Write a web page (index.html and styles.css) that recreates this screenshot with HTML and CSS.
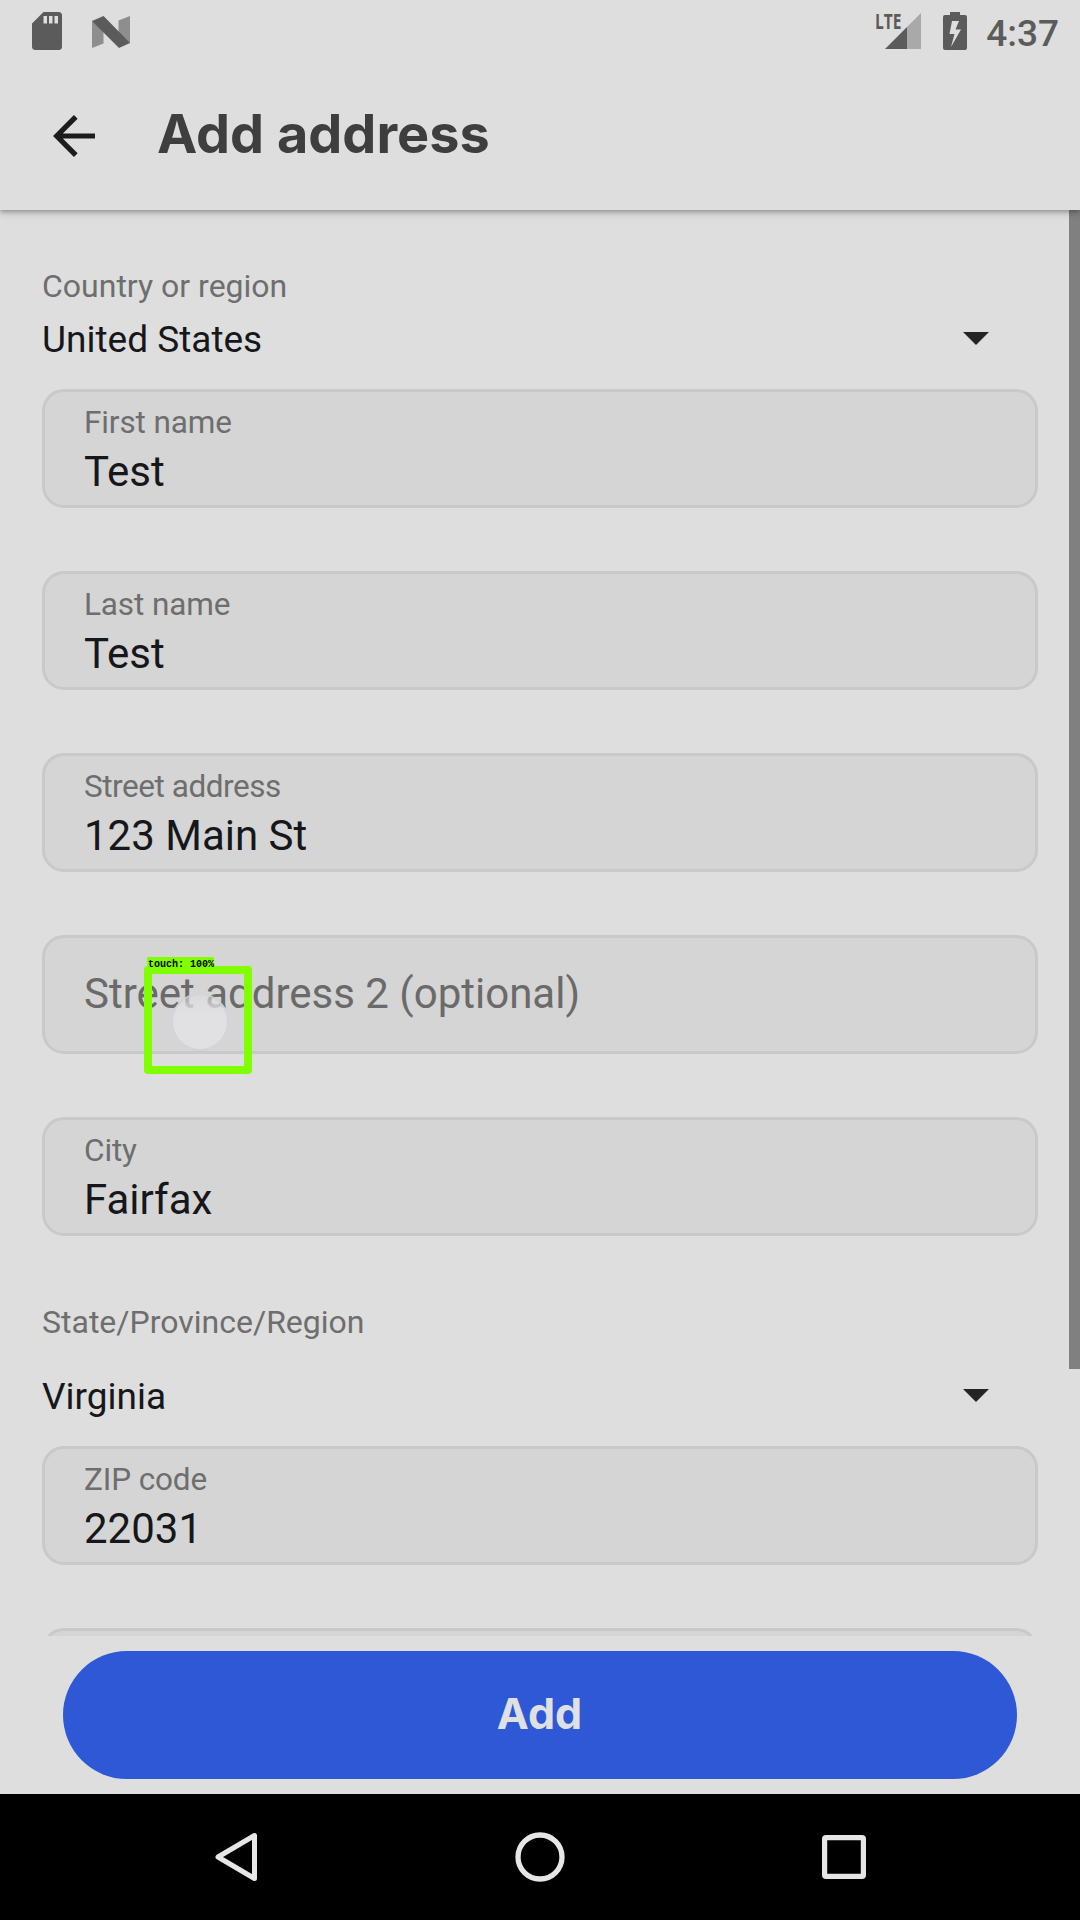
FILE: index.html
```html
<!DOCTYPE html>
<html lang="en">
<head>
<meta charset="utf-8">
<title>Add address</title>
<link rel="stylesheet" href="styles.css">
</head>
<body>
<div class="screen">
  <header class="top">
    <div class="status">
      <div class="status-left">
        <svg class="sd" width="30" height="38" viewBox="0 0 30 38"><path fill="#5b5b5b" fill-rule="evenodd" d="M11.500 0H26.500Q30 0 30 3.500V34.500Q30 38 26.500 38H3.500Q0 38 0 34.500V11.500ZM11.500 4V11.500H15V4ZM17 4V11.500H20.500V4ZM22.500 4V11.500H26V4Z"/></svg>
        <svg class="nougat" width="38" height="32" viewBox="0 0 38 32"><path fill="#8e8e8e" d="M0 5L11.500 9V27.500L0 32ZM26.500 4.500L38 0V27H26.500Z"/><path fill="#5b5b5b" d="M0 5L11.500 0L38 27L27 32Z"/></svg>
      </div>
      <div class="status-right">
        <div class="signal">
          <svg width="36" height="36" viewBox="0 0 36 36"><path fill="#a9a9a9" d="M36 0V36H22V14Z"/><path fill="#5b5b5b" d="M22 14V36H0Z"/></svg>
          <span class="lte">LTE</span>
        </div>
        <svg class="battery" width="24" height="38" viewBox="0 0 24 38"><path fill="#5b5b5b" fill-rule="evenodd" d="M7 0H17V3H22Q24 3 24 5V36Q24 38 22 38H2Q0 38 0 36V5Q0 3 2 3H7ZM9 9L6.500 22H11.500L8 35L18 17.500H12.500L16 9Z"/></svg>
        <span class="clock">4:37</span>
      </div>
    </div>
    <div class="appbar">
      <svg class="back" width="42" height="42" viewBox="0 0 42 42" fill="none" stroke="#1c1c1c" stroke-width="5.200"><path d="M42 21H4M22.800 1.800L3.700 21L22.800 40.200"/></svg>
      <h1 class="title">Add address</h1>
    </div>
  </header>

  <main class="form">
    <div class="select">
      <div class="select-label">Country or region</div>
      <div class="select-row"><span>United States</span><svg class="caret" width="26" height="13" viewBox="0 0 26 13"><path fill="#242424" d="M0 0H26L13 13Z"/></svg></div>
    </div>
    <div class="field"><span class="label">First name</span><span class="value">Test</span></div>
    <div class="field"><span class="label">Last name</span><span class="value">Test</span></div>
    <div class="field"><span class="label tight">Street address</span><span class="value">123 Main St</span></div>
    <div class="field empty">
      <span class="value">Street address 2 (optional)</span>
      <div class="touch-dot"></div>
      <div class="touch-box"></div>
      <div class="touch-tag">touch: 100%</div>
    </div>
    <div class="field"><span class="label">City</span><span class="value">Fairfax</span></div>
    <div class="select state">
      <div class="select-label">State/Province/Region</div>
      <div class="select-row"><span>Virginia</span><svg class="caret" width="26" height="13" viewBox="0 0 26 13"><path fill="#242424" d="M0 0H26L13 13Z"/></svg></div>
    </div>
    <div class="field"><span class="label">ZIP code</span><span class="value">22031</span></div>
    <div class="field"></div>
    <div class="scrollbar"></div>
  </main>

  <footer class="actions"><button class="add" type="button">Add</button></footer>

  <nav class="navbar">
    <svg width="44" height="50" viewBox="0 0 44 50"><path fill="none" stroke="#e6e6e6" stroke-width="5" stroke-linejoin="round" d="M40.500 3.500V46.500L4 25Z"/></svg>
    <svg width="50" height="50" viewBox="0 0 50 50"><circle cx="25" cy="25" r="22" fill="none" stroke="#e6e6e6" stroke-width="5.300"/></svg>
    <svg width="44" height="44" viewBox="0 0 44 44"><rect x="2.600" y="2.600" width="38.800" height="38.800" rx="1.500" fill="none" stroke="#e6e6e6" stroke-width="5.200"/></svg>
  </nav>
</div>
</body>
</html>
```
FILE: styles.css
```css
* { box-sizing: border-box; }
body { margin: 0; font-family: Roboto, "Liberation Sans", sans-serif; }
svg { display: block; flex: none; }

.screen {
  width: 1080px;
  height: 1920px;
  display: flex;
  flex-direction: column;
  overflow: hidden;
  background: #dedede;
  color: #16171a;
}

.top {
  flex: none;
  height: 210px;
  background: #dedede;
  z-index: 1;
  box-shadow: 0 2px 4px rgba(0, 0, 0, .24), 0 4px 8px rgba(0, 0, 0, .12);
}
.status {
  height: 63px;
  padding: 12px 21px 0 32px;
  display: flex;
  justify-content: space-between;
}
.status-left, .status-right { display: flex; align-items: flex-start; }
.nougat { margin: 4px 0 0 30px; }
.signal { position: relative; padding-top: 1px; }
.lte {
  position: absolute;
  left: -10px;
  top: -3px;
  font: 700 21px/24px "Open Sans", sans-serif;
  color: #5b5b5b;
  transform: scaleX(.74);
  transform-origin: 0 0;
}
.battery { margin-left: 22px; }
.clock {
  margin-left: 19px;
  font-size: 37px;
  font-weight: 500;
  line-height: 43px;
  color: #5b5b5b;
}
.appbar {
  height: 147px;
  padding-left: 53px;
  display: flex;
  align-items: center;
}
.back { margin-bottom: 1px; }
.title {
  margin: -6px 0 0 62px;
  font: 700 54px/64px Inter, sans-serif;
  color: #3e3e3e;
}

.form {
  flex: none;
  position: relative;
  height: 1426px;
  padding: 56px 42px 0;
  overflow: hidden;
}
.select { margin-bottom: 27px; }
.select-label { font-size: 32px; line-height: 40px; color: #6e6e6e; }
.select-row {
  margin-top: 12px;
  padding-right: 49px;
  display: flex;
  justify-content: space-between;
  align-items: center;
  font-size: 37px;
  line-height: 44px;
}
.caret { margin-bottom: 4px; }
.state { padding-top: 3px; }
.state .select-row { margin-top: 33px; }

.field {
  position: relative;
  height: 119px;
  margin-bottom: 63px;
  padding: 13px 39px 0;
  display: flex;
  flex-direction: column;
  gap: 6px;
  border: 3px solid #c9c9c9;
  border-radius: 22px;
  background: #d5d5d5;
}
.label { font-size: 31.500px; line-height: 36px; letter-spacing: -.12px; color: #6e6e6e; }
.tight { letter-spacing: -.45px; }
.value { font-size: 42px; line-height: 50px; white-space: nowrap; }
.empty { padding-top: 31px; }
.empty .value { color: #6a6a6a; }

.touch-dot {
  position: absolute;
  left: 126px;
  top: 55px;
  width: 58px;
  height: 58px;
  border: 2px solid rgba(208, 207, 216, .75);
  border-radius: 50%;
  background: linear-gradient(rgba(222, 221, 226, .5), rgba(225, 225, 227, .95) 35%);
}
.touch-box {
  position: absolute;
  left: 99px;
  top: 28px;
  width: 108px;
  height: 108px;
  border: 8px solid #80ff00;
  border-radius: 4px;
}
.touch-tag {
  position: absolute;
  left: 102px;
  top: 19px;
  width: 67px;
  height: 11px;
  padding-left: 1px;
  background: #80ff00;
  color: #000;
  font: 700 10px/15px "Liberation Mono", monospace;
  white-space: nowrap;
}
.scrollbar {
  position: absolute;
  right: 0;
  top: 0;
  width: 11px;
  height: 1159px;
  background: #808080;
}

.actions { flex: none; height: 158px; padding: 15px 63px; }
.add {
  display: block;
  width: 100%;
  height: 128px;
  padding: 0 1px 5px 0;
  border: 0;
  border-radius: 64px;
  background: #2e58d5;
  color: #dee0e4;
  font: 700 43px/52px Inter, sans-serif;
}

.navbar {
  flex: 1;
  padding: 0 214px;
  display: flex;
  justify-content: space-between;
  align-items: center;
  background: #000;
}
```
